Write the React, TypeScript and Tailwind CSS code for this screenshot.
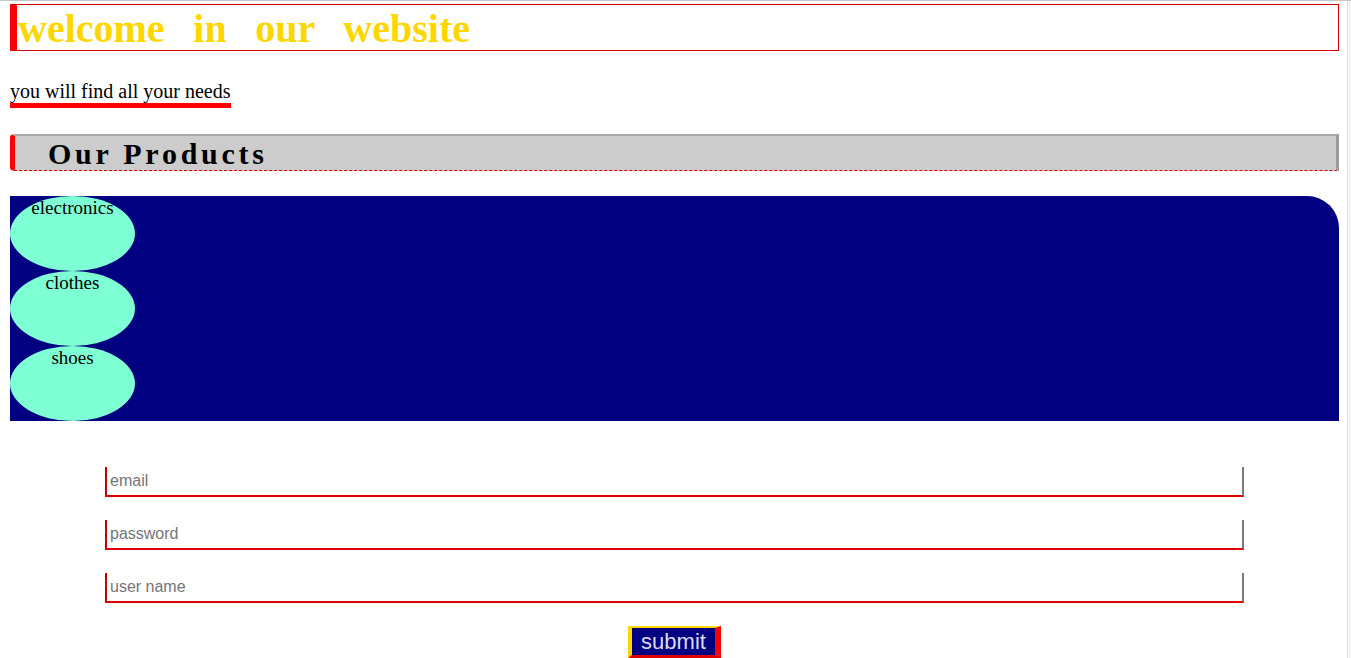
export default function App() {
  const products = ["electronics", "clothes", "shoes"];
  const fields = [
    { ph: "email", type: "email" },
    { ph: "password", type: "password" },
    { ph: "user name", type: "text" },
  ];

  return (
    <div className="flex h-[658px] w-[1351px] overflow-hidden border-t border-[#c6c6c6] bg-white">
      <div className="flex w-[1347px] flex-col px-[10px] pr-[8px]">
        <h1 className="mt-[3px] flex h-[48px] items-center border border-l-[7px] border-[#d40000] border-l-[#ff0000] pl-[1px] pt-[4px] font-['Liberation_Serif',serif] text-[40px] font-bold leading-none text-[#ffd700] [word-spacing:18.7px]">
          welcome in our website
        </h1>

        <div className="mt-[29px]">
          <p className="inline-block border-b-[5px] border-[#ff0000] font-['Liberation_Serif',serif] text-[20px] leading-[23px] text-black">
            you will find all your needs
          </p>
        </div>

        <h2 className="mt-[26px] flex h-[38px] items-center rounded-l-[4px] border-t-2 border-r-[3px] border-l-[5px] border-t-[#a8a8a8] border-r-[#9a9a9a] border-l-[#ff0000] bg-[#cccccc] pl-[33px] pt-[2px] font-['Liberation_Serif',serif] text-[30px] font-bold leading-none tracking-[3.75px] text-black [border-bottom:1px_dashed_#e00000]">
          Our Products
        </h2>

        <div className="mt-[25px] flex h-[225px] flex-col rounded-tr-[32px] bg-[#000080]">
          {products.map((p) => (
            <div
              key={p}
              className="flex h-[75px] w-[125px] justify-center rounded-[50%] bg-[#7fffd4] pt-[1px] font-['Liberation_Serif',serif] text-[19px] leading-[22px] text-black"
            >
              {p}
            </div>
          ))}
        </div>

        <form className="mt-[46px] flex flex-col items-center gap-[23px]">
          {fields.map((f) => (
            <input
              key={f.ph}
              type={f.type}
              placeholder={f.ph}
              className="h-[30px] w-[1139px] border-t-0 border-r-2 border-b-2 border-l-2 border-r-[#7a7a7a] border-b-[#e00000] border-l-[#c40000] bg-white px-[3px] font-['Liberation_Sans',Arial,sans-serif] text-[16px] text-black outline-none placeholder:text-[#757575]"
            />
          ))}
          <button
            type="button"
            className="h-[32px] w-[93px] border-t-2 border-r-[6px] border-b-[3px] border-l-[4px] border-t-[#ffd700] border-r-[#ff0000] border-b-[#e00000] border-l-[#ffd700] bg-[#000080] font-['Liberation_Sans',Arial,sans-serif] text-[22px] leading-none text-[#dcdcf0]"
          >
            submit
          </button>
        </form>
      </div>
      <div className="w-[4px] border-l border-[#e2e2e2] bg-[#f4f4f4]" />
    </div>
  );
}
